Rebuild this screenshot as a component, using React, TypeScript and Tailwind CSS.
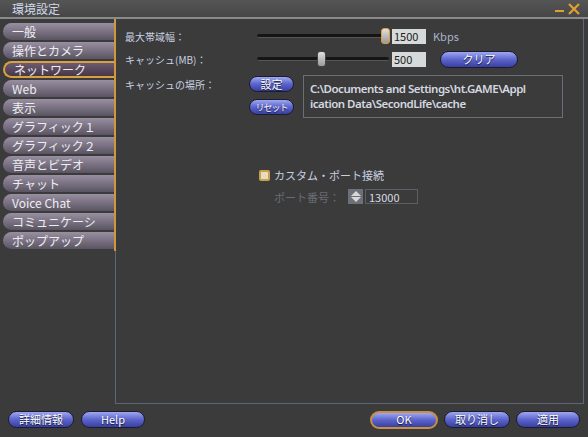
import React from "react";

const font = { fontFamily: '"Noto Sans CJK JP", "Noto Sans", sans-serif' };

const tabs = [
  "一般",
  "操作とカメラ",
  "ネットワーク",
  "Web",
  "表示",
  "グラフィック１",
  "グラフィック２",
  "音声とビデオ",
  "チャット",
  "Voice Chat",
  "コミュニケーシ",
  "ポップアップ",
];

function BlueButton({ label, className = "", active = false }: { label: string; className?: string; active?: boolean }) {
  return (
    <div
      className={`flex items-center justify-center whitespace-nowrap rounded-full bg-gradient-to-b from-[#a0a8f0] via-[#5c64cc] to-[#3a40a0] leading-none text-white [text-shadow:0_1px_1px_#101030] ${
        active ? "border-2 border-[#c89040]" : "border border-[#1c1c30]"
      } ${className}`}
    >
      {label}
    </div>
  );
}

function Slider({ pos, focus = false }: { pos: number; focus?: boolean }) {
  return (
    <div className="relative h-4 w-[132px]">
      <div className="absolute left-0 right-0 top-[6px] h-[4px] rounded-full border-b border-[#555] bg-[#151515]" />
      <div
        className={`absolute top-0 h-4 w-[9px] rounded-[3px] bg-gradient-to-b from-[#e0e0e0] to-[#9a9a9a] ${
          focus ? "border border-[#e0a040]" : "border border-[#444]"
        }`}
        style={{ left: pos }}
      />
    </div>
  );
}

export default function App() {
  return (
    <div className="flex h-[437px] w-[588px] flex-col bg-[#3b3b3b] text-[#c8d0e0]" style={font}>
      {/* title bar */}
      <div className="flex h-[19px] items-center justify-between border-b-2 border-[#8a8a8a] bg-gradient-to-b from-[#555] to-[#474747] pl-3 pr-2">
        <span className="text-[12px] leading-none text-[#d0d8e8]">環境設定</span>
        <div className="flex items-center gap-1">
          <div className="mt-[4px] h-[2px] w-[9px] bg-[#e0a030]" />
          <svg width="12" height="12" viewBox="0 0 12 12">
            <path d="M1 1 L11 11 M11 1 L1 11" stroke="#e0a030" strokeWidth="2.2" />
          </svg>
        </div>
      </div>

      <div className="flex h-[385px]">
        {/* sidebar */}
        <div className="flex w-[116px] flex-col">
          <div className="flex flex-col gap-[2px] border-r-2 border-[#d0983a] pb-[2px] pl-[3px] pt-[4px]">
            {tabs.map((t) => {
              const sel = t === "ネットワーク";
              return (
                <div
                  key={t}
                  className={`flex h-[17px] items-center whitespace-nowrap rounded-l-full pl-[9px] text-[12px] leading-none text-[#eeeef2] ${
                    sel
                      ? "border-2 border-r-0 border-[#d8a040] bg-gradient-to-b from-[#6e5a70] to-[#453848]"
                      : "bg-gradient-to-b from-[#9890a0] via-[#7a7282] to-[#5a5462]"
                  }`}
                >
                  {t}
                </div>
              );
            })}
          </div>
          <div className="flex-1 border-r border-[#5c6676]" />
        </div>

        {/* panel */}
        <div className="mr-[4px] flex flex-1 flex-col border-b border-r border-[#5c6676] pl-[9px] pt-[8px] text-[10px]">
          <div className="flex h-[18px] items-center">
            <span className="w-[132px]">最大帯域幅：</span>
            <Slider pos={124} focus />
            <div className="ml-[3px] flex h-[15px] w-[34px] items-center bg-[#d6dada] pl-[2px] text-[11px] text-[#202020]">1500</div>
            <span className="ml-[7px] text-[11px] text-[#a8b4cc]">Kbps</span>
          </div>
          <div className="mt-[5px] flex h-[18px] items-center">
            <span className="w-[132px]">キャッシュ(MB)：</span>
            <Slider pos={60} />
            <div className="ml-[3px] flex h-[15px] w-[34px] items-center bg-[#d6dada] pl-[2px] text-[11px] text-[#202020]">500</div>
            <BlueButton label="クリア" className="ml-[14px] h-[17px] w-[78px] text-[11px]" />
          </div>
          <div className="mt-[7px] flex">
            <span className="mt-[2px] w-[124px]">キャッシュの場所：</span>
            <div className="flex flex-col gap-[7px] pt-[1px]">
              <BlueButton label="設定" className="h-[16px] w-[45px] text-[11px]" />
              <BlueButton label="リセット" className="h-[16px] w-[45px] text-[9px] tracking-[-1px]" />
            </div>
            <div
              className="ml-[9px] h-[43px] w-[260px] overflow-hidden whitespace-nowrap border border-[#6a6e76] px-[6px] pt-[5px] text-[11.5px] font-semibold leading-[15px] tracking-[-0.5px] text-[#d4d8e0]"
              style={{ fontFamily: '"Noto Sans", sans-serif' }}
            >
              C:\Documents and Settings\ht.GAME\Appl
              <br />
              ication Data\SecondLife\cache
            </div>
          </div>

          <div className="ml-[134px] mt-[49px] flex items-center gap-[4px]">
            <div className="h-[11px] w-[11px] rounded-[2px] border-2 border-[#c8a050] bg-[#e8dcc0]" />
            <span className="text-[11px]">カスタム・ポート接続</span>
          </div>
          <div className="ml-[149px] mt-[5px] flex items-center">
            <span className="w-[74px] text-[11px] text-[#686c74]">ポート番号：</span>
            <div className="flex h-[15px] w-[15px] flex-col justify-center gap-[1px] bg-[#6c7078]">
              <div className="mx-auto h-0 w-0 border-x-[5px] border-b-[5px] border-x-transparent border-b-[#d8d8d8]" />
              <div className="mx-auto h-0 w-0 border-x-[5px] border-t-[5px] border-x-transparent border-t-[#d8d8d8]" />
            </div>
            <div className="ml-[2px] flex h-[15px] w-[53px] items-center border border-[#5a5e66] pl-[3px] text-[11px] text-[#d8dce4]">13000</div>
          </div>
        </div>
      </div>

      {/* footer */}
      <div className="flex flex-1 items-center px-[8px] pb-[2px]">
        <BlueButton label="詳細情報" className="h-[17px] w-[66px] text-[11px]" />
        <BlueButton label="Help" className="ml-[7px] h-[17px] w-[64px] text-[11px]" />
        <div className="flex-1" />
        <BlueButton label="OK" active className="h-[18px] w-[68px] text-[11px]" />
        <BlueButton label="取り消し" className="ml-[6px] h-[17px] w-[66px] text-[11px]" />
        <BlueButton label="適用" className="ml-[6px] h-[17px] w-[64px] text-[11px]" />
      </div>
    </div>
  );
}
